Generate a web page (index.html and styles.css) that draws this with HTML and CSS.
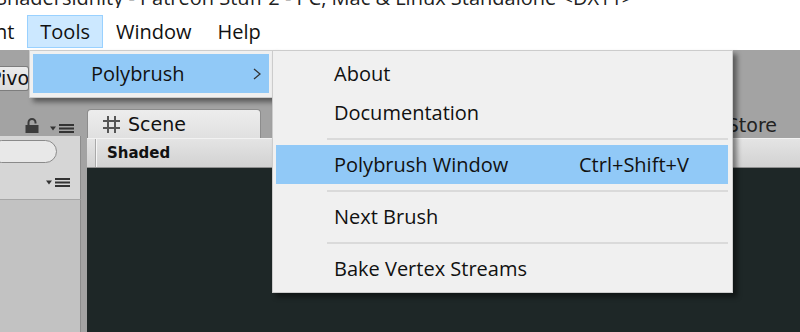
FILE: index.html
```html
<!DOCTYPE html>
<html>
<head>
    <title>Unity - Tools menu</title>
    <link rel="stylesheet" href="styles.css">
</head>
<body>
    <div class="title"><span>Shadersidnity - Patreon Stuff 2 - PC, Mac &amp; Linux Standalone &lt;DX11&gt;</span></div>
    <nav class="menubar">
        <span class="menu-item">Component</span>
        <span class="menu-item active">Tools</span>
        <span class="menu-item">Window</span>
        <span class="menu-item">Help</span>
    </nav>

    <div class="editor">
        <div class="toolbar">
            <div class="tool-btn"><span>Pivot</span></div>
        </div>
        <div class="panes">
            <div class="hierarchy">
                <div class="pane-tabs">
                    <svg class="lock" width="14" height="15" viewBox="0 0 14 15">
                        <path d="M3.5 7.5V4.5a3.5 3.5 0 0 1 7 0V5.5" fill="none" stroke="#3c3c3c" stroke-width="2"/>
                        <rect x="0.5" y="7" width="13" height="8" fill="#3c3c3c"/>
                    </svg>
                    <svg class="pane-menu" width="24" height="9" viewBox="0 0 24 9">
                        <polygon points="0,2.5 6,2.5 3,6.5" fill="#333"/>
                        <rect x="9" y="0" width="15" height="2" fill="#333"/>
                        <rect x="9" y="3.5" width="15" height="2" fill="#333"/>
                        <rect x="9" y="7" width="15" height="2" fill="#333"/>
                    </svg>
                </div>
                <div class="search-row"><div class="search"></div></div>
                <div class="list-head">
                    <svg class="pane-menu" width="24" height="9" viewBox="0 0 24 9">
                        <polygon points="0,2.5 6,2.5 3,6.5" fill="#333"/>
                        <rect x="9" y="0" width="15" height="2" fill="#333"/>
                        <rect x="9" y="3.5" width="15" height="2" fill="#333"/>
                        <rect x="9" y="7" width="15" height="2" fill="#333"/>
                    </svg>
                </div>
                <div class="list"></div>
            </div>
            <div class="scene">
                <div class="scene-tabs">
                    <div class="tab active">
                        <svg width="19" height="19" viewBox="0 0 19 19">
                            <path d="M6 1V18M13 1V18M1 6H18M1 13H18" stroke="#555" stroke-width="2"/>
                        </svg>
                        Scene
                    </div>
                    <div class="tab store">Asset Store</div>
                </div>
                <div class="scene-bar"><span class="bar-sep"></span>Shaded</div>
                <div class="viewport"></div>
            </div>
        </div>
    </div>

    <!-- open menus -->
    <div class="dropdown tools-menu">
        <div class="item hl">
            Polybrush
            <svg class="chevron" width="8" height="12" viewBox="0 0 8 12">
                <polyline points="1,1 7,6 1,11" fill="none" stroke="#333" stroke-width="1.3"/>
            </svg>
        </div>
    </div>
    <div class="dropdown sub-menu">
        <div class="item">About</div>
        <div class="item">Documentation</div>
        <div class="sep"></div>
        <div class="item hl has-key"><span>Polybrush Window</span><span>Ctrl+Shift+V</span></div>
        <div class="sep"></div>
        <div class="item">Next Brush</div>
        <div class="sep"></div>
        <div class="item">Bake Vertex Streams</div>
    </div>
</body>
</html>
```

FILE: styles.css
```css
* {
    box-sizing: border-box;
}
body {
    margin: 0;
    width: 800px;
    height: 332px;
    overflow: hidden;
    position: relative;
    background: #fff;
    color: #111;
    font-family: "Open Sans", sans-serif;
}
.title {
    height: 8px;
    overflow: hidden;
    font-size: 20px;
    line-height: 20px;
    white-space: nowrap;
    color: #222;
}
.title span {
    display: block;
    margin: -12px 0 0 -4px;
}
.menubar {
    display: flex;
    height: 42px;
    padding-top: 7px;
    margin-left: -109px;
    font-size: 20px;
}
.menu-item {
    height: 33px;
    line-height: 31px;
    padding: 0 12px;
    border: 1px solid transparent;
}
.menu-item.active {
    background: #cce8ff;
    border-color: #99d1ff;
}

/* editor behind the menus */
.editor {
    height: 282px;
    display: flex;
    flex-direction: column;
    background: #a3a3a3;
    font-family: "DejaVu Sans", sans-serif;
    color: #111;
}
.toolbar {
    height: 50px;
    flex: none;
    padding-top: 16px;
}
.tool-btn {
    width: 29px;
    height: 25px;
    overflow: hidden;
    white-space: nowrap;
    font-size: 19px;
    line-height: 23px;
    color: #111;
    background: linear-gradient(#ececec, #dcdcdc);
    border: 1px solid #7d7d7d;
    border-left: none;
    border-radius: 0 3px 3px 0;
}
.tool-btn span {
    display: block;
    margin-left: -10px;
}
.panes {
    flex: 1;
    display: flex;
    gap: 6px;
}
.hierarchy {
    width: 81px;
    display: flex;
    flex-direction: column;
}
.pane-tabs {
    height: 36px;
    flex: none;
    display: flex;
    align-items: flex-end;
    justify-content: flex-end;
    gap: 11px;
    padding: 0 7px 3px 0;
}
.pane-tabs svg, .list-head svg {
    display: block;
}
.search-row {
    height: 30px;
    flex: none;
    padding-top: 4px;
    background: #d6d6d6;
    border-right: 1px solid #8c8c8c;
}
.search {
    width: 67px;
    height: 23px;
    margin-left: -10px;
    background: #e8e8e8;
    border: 1px solid #8a8a8a;
    border-radius: 12px;
}
.list-head {
    height: 34px;
    flex: none;
    display: flex;
    align-items: center;
    justify-content: flex-end;
    padding-right: 10px;
    background: #d6d6d6;
    border-right: 1px solid #8c8c8c;
    border-bottom: 1px solid #a6a6a6;
}
.list {
    flex: 1;
    background: #c2c2c2;
    border-right: 1px solid #8c8c8c;
}
.scene {
    flex: 1;
    display: flex;
    flex-direction: column;
}
.scene-tabs {
    height: 38px;
    flex: none;
    display: flex;
    align-items: flex-end;
}
.tab {
    font-size: 19px;
}
.tab.active {
    width: 174px;
    height: 29px;
    display: flex;
    align-items: center;
    gap: 7px;
    padding-left: 14px;
    background: linear-gradient(#ededed, #e0e0e0);
    border: 1px solid #8c8c8c;
    border-bottom: none;
    border-radius: 4px 4px 0 0;
}
.tab.active svg {
    display: block;
}
.tab.store {
    margin-left: auto;
    padding: 0 23px 2px 0;
    color: #222;
}
.scene-bar {
    height: 30px;
    flex: none;
    display: flex;
    align-items: center;
    font-size: 15px;
    font-weight: bold;
    background: linear-gradient(#e4e4e4, #d2d2d2);
    border-top: 1px solid #f2f2f2;
    border-bottom: 1px solid #8f8f8f;
}
.bar-sep {
    align-self: stretch;
    width: 2px;
    margin: 0 10px 0 8px;
    border-left: 1px solid #a9a9a9;
    border-right: 1px solid #f6f6f6;
}
.viewport {
    flex: 1;
    background: #1e2727;
}

/* windows menus */
.dropdown {
    position: absolute;
    top: 50px;
    background: #f0f0f0;
    border: 1px solid #cccccc;
    padding: 3px 4px 4px 3px;
    box-shadow: 4px 4px 5px rgba(0, 0, 0, 0.45);
    font-size: 20px;
    color: #111;
}
.tools-menu {
    left: 29px;
    width: 245px;
    height: 48px;
}
.sub-menu {
    left: 272px;
    width: 461px;
    height: 243px;
}
.item {
    height: 39px;
    line-height: 39px;
    padding-left: 58px;
    white-space: nowrap;
}
.item.hl {
    background: #91c9f7;
}
.tools-menu .item {
    display: flex;
    align-items: center;
}
.chevron {
    margin: 0 8px 0 auto;
}
.item.has-key {
    display: grid;
    grid-template-columns: 1fr 149px;
}
.sep {
    height: 2px;
    margin: 6px 0 5px 51px;
    background: #dadada;
}
```
